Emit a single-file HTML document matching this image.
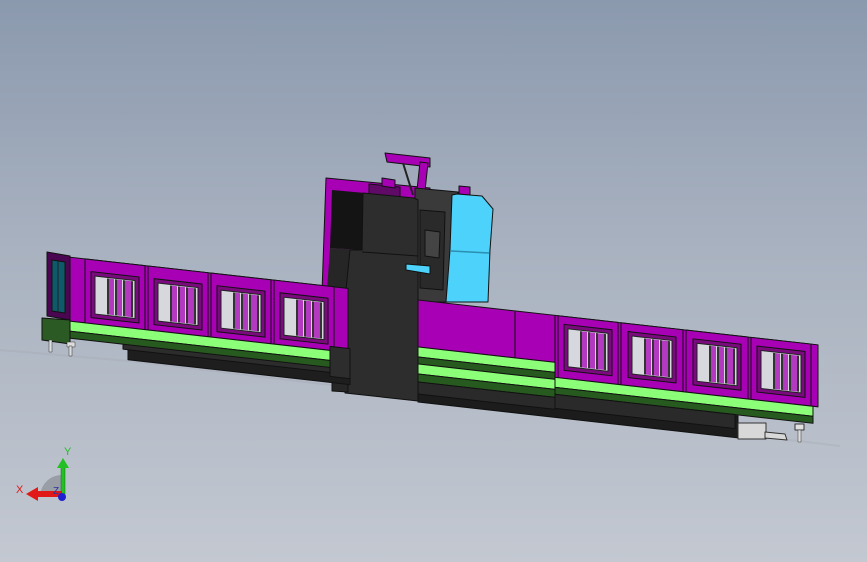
<!DOCTYPE html>
<html><head><style>
html,body{margin:0;padding:0;width:867px;height:562px;overflow:hidden}
body{background:linear-gradient(180deg,#8b99ae 0%,#a9b2c0 45%,#c3c8d1 100%)}
svg{position:absolute;left:0;top:0}
</style></head><body>
<svg width="867" height="562" viewBox="0 0 867 562" xmlns="http://www.w3.org/2000/svg" stroke-linejoin="round">
<defs>
<g id="win">
  <rect x="0" y="0" width="48" height="46" fill="#7a0a7e" stroke="#111" stroke-width="1"/>
  <rect x="4" y="4" width="40" height="38" fill="#d6d8de" stroke="#222" stroke-width="1"/>
  <rect x="18" y="5" width="5" height="36" fill="#b33ac0"/>
  <rect x="26" y="5" width="5" height="36" fill="#b33ac0"/>
  <rect x="34" y="5" width="6" height="36" fill="#b33ac0"/>
  <rect x="16" y="5" width="2" height="36" fill="#333"/>
  <rect x="24" y="5" width="2" height="36" fill="#333"/>
  <rect x="32" y="5" width="2" height="36" fill="#333"/>
  <rect x="40" y="5" width="2" height="36" fill="#333"/>
</g>
<g id="panel">
  <rect x="0" y="0" width="60" height="64" fill="#a800b4" stroke="#111" stroke-width="1"/>
</g>
</defs>

<!-- ground shadow line -->
<polygon points="0,349 130,360 840,445 840,447 130,362 0,351" fill="#a4aab3" opacity="0.35"/>

<!-- back column frame -->
<polygon points="326,178 430,188 430,300 322,292" fill="#a800b4" stroke="#111"/>
<polygon points="332,190 365,193 362,250 330,248" fill="#141414"/>
<polygon points="330,248 362,250 360,292 327,290" fill="#262626"/>
<!-- top boom -->
<polygon points="385,153 430,158 430,167 387,162" fill="#a800b4" stroke="#111"/>
<polygon points="420,162 428,163 424,200 416,199" fill="#a800b4" stroke="#111"/>
<line x1="403" y1="163" x2="413" y2="195" stroke="#222" stroke-width="2"/>
<polygon points="369,184 400,187 400,200 369,197" fill="#5e0a66" stroke="#111"/>
<polygon points="382,178 395,180 395,188 382,186" fill="#a800b4" stroke="#111"/>
<!-- mechanism -->
<polygon points="415,188 458,192 455,302 415,302" fill="#3a3a3a" stroke="#111"/>
<polygon points="420,210 445,212 443,290 420,288" fill="#2a2a2a" stroke="#111"/>
<polygon points="425,230 440,232 439,258 425,256" fill="#444" stroke="#111"/>
<polygon points="459,186 470,187 470,195 459,194" fill="#a800b4" stroke="#111"/>
<!-- cyan -->
<polygon points="457,194 482,196 493,209 490,250 488,302 446,302 450,250 452,195" fill="#4dd2fb" stroke="#111"/>
<line x1="451" y1="251" x2="489" y2="253" stroke="#2a8fb0" stroke-width="1.5"/>
<!-- column -->
<polygon points="363,193 414,198 418,200 418,401 345,393 345,300 350,250 362,250" fill="#2d2d2d" stroke="#111"/>
<line x1="362" y1="252" x2="418" y2="256" stroke="#111"/>
<polygon points="406,264 430,266 430,274 406,270" fill="#4dd2fb" stroke="#111"/>
<polygon points="332,346 347,336 348,392 332,391" fill="#262626" stroke="#111"/>

<!-- LEFT MODULE -->
<g transform="translate(68,257) skewY(6.4)">
  <rect x="60" y="82" width="222" height="14" fill="#1e1e1e" stroke="#111"/>
  <rect x="55" y="78" width="227" height="8" fill="#2c2c2c" stroke="#111"/>
  <rect x="0" y="0" width="280" height="64" fill="#a800b4" stroke="#111"/>
  <use href="#panel" x="17" y="0"/>
  <use href="#panel" x="80" y="0"/>
  <use href="#panel" x="143" y="0"/>
  <use href="#panel" x="206" y="0"/>
  <use href="#win" x="23" y="12"/>
  <use href="#win" x="86" y="12"/>
  <use href="#win" x="149" y="12"/>
  <use href="#win" x="212" y="12"/>
  <rect x="0" y="64" width="262" height="10" fill="#8cff78" stroke="#111"/>
  <rect x="0" y="74" width="262" height="7" fill="#275a1e" stroke="#111"/>
  <rect x="262" y="60" width="20" height="30" fill="#2d2d2d" stroke="#111"/>
</g>
<!-- left end cap -->
<polygon points="47,252 70,256 70,320 47,316" fill="#4a0650" stroke="#111"/>
<polygon points="52,260 65,262 65,313 52,311" fill="#0f5a6a" stroke="#111"/>
<line x1="58" y1="261" x2="58" y2="312" stroke="#222"/>
<polygon points="42,318 70,320 70,344 42,340" fill="#2c5a24" stroke="#111"/>
<rect x="49" y="340" width="3" height="12" fill="#ddd" stroke="#333" stroke-width=".5"/>
<rect x="67" y="342" width="8" height="5" fill="#ddd" stroke="#333" stroke-width=".5"/>
<rect x="69" y="346" width="3" height="10" fill="#ddd" stroke="#333" stroke-width=".5"/>

<!-- RIGHT MODULE -->
<g transform="translate(418,300) skewY(6.4)">
  <rect x="0" y="80" width="320" height="22" fill="#1c1c1c" stroke="#111"/>
  <rect x="0" y="0" width="137" height="47" fill="#a800b4" stroke="#111"/>
  <line x1="97" y1="0" x2="97" y2="47" stroke="#111"/>
  <rect x="0" y="47" width="137" height="10" fill="#8cff78" stroke="#111"/>
  <rect x="0" y="57" width="137" height="7" fill="#275a1e" stroke="#111"/>
  <rect x="0" y="64" width="137" height="10" fill="#8cff78" stroke="#111"/>
  <rect x="0" y="74" width="137" height="8" fill="#275a1e" stroke="#111"/>
  <rect x="0" y="82" width="137" height="12" fill="#2a2a2a" stroke="#111"/>
  <rect x="137" y="0" width="263" height="62" fill="#a800b4" stroke="#111"/>
  <rect x="140" y="0" width="60" height="62" fill="#a800b4" stroke="#111"/>
  <rect x="203" y="0" width="62" height="62" fill="#a800b4" stroke="#111"/>
  <rect x="268" y="0" width="62" height="62" fill="#a800b4" stroke="#111"/>
  <rect x="333" y="0" width="60" height="62" fill="#a800b4" stroke="#111"/>
  <use href="#win" x="146" y="8"/>
  <use href="#win" x="210" y="8"/>
  <use href="#win" x="275" y="8"/>
  <use href="#win" x="339" y="8"/>
  <rect x="137" y="62" width="258" height="10" fill="#8cff78" stroke="#111"/>
  <rect x="137" y="72" width="258" height="7" fill="#275a1e" stroke="#111"/>
  <rect x="137" y="79" width="180" height="14" fill="#2a2a2a" stroke="#111"/>
</g>
<!-- right foot details -->
<rect x="738" y="423" width="28" height="16" fill="#d8d8d8" stroke="#333"/>
<polygon points="765,432 785,434 787,440 765,438" fill="#d8d8d8" stroke="#333"/>
<rect x="795" y="424" width="9" height="6" fill="#e0e0e0" stroke="#333"/>
<rect x="798" y="430" width="3" height="12" fill="#ddd" stroke="#333" stroke-width=".5"/>

<!-- axis triad -->
<path d="M62,497 L62,475 A22,22 0 0 0 40,497 Z" fill="#8e949c" opacity="0.8"/>
<polygon points="61,466 65,466 65,497 61,497" fill="#22c022" stroke="#137013" stroke-width=".5"/>
<polygon points="57,468 63,458 69,468" fill="#22c022"/>
<polygon points="36,491 62,491 62,497 36,497" fill="#e01818"/>
<polygon points="38,487 26,494 38,501" fill="#e01818"/>
<circle cx="62" cy="497" r="4" fill="#2020d0"/>
<text x="64" y="455" font-family="Liberation Sans, sans-serif" font-size="11" fill="#22c022">Y</text>
<text x="16" y="493" font-family="Liberation Sans, sans-serif" font-size="11" fill="#e01818">X</text>
<text x="53" y="494" font-family="Liberation Sans, sans-serif" font-size="10" fill="#3030a0">Z</text>
</svg>
</body></html>
